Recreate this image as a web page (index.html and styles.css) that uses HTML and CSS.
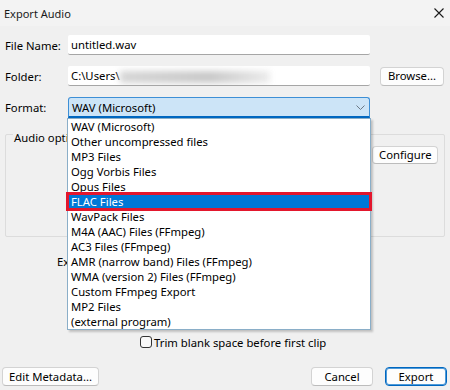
FILE: index.html
```html
<!DOCTYPE html>
<html>

<head>
    <title>Export Audio</title>
    <link rel="stylesheet" href="styles.css">
</head>

<body>
    <div class="dialog">
        <div class="titleBar">
            <span class="titleText">Export Audio</span>
            <svg class="closeIcon" width="10" height="10" viewBox="0 0 10 10">
                <path d="M0.5 0.5 L9.5 9.5 M9.5 0.5 L0.5 9.5" stroke="#1a1a1a" stroke-width="1.1" fill="none" />
            </svg>
        </div>

        <div class="form">
            <div class="row firstRow">
                <div class="label">File Name:</div>
                <div class="textInput">untitled.wav</div>
            </div>
            <div class="row">
                <div class="label">Folder:</div>
                <div class="textInput">C:\Users\<span class="blurred"></span></div>
                <button class="btn browseBtn">Browse...</button>
            </div>
            <div class="row">
                <div class="label">Format:</div>
                <div class="combo">
                    <span>WAV (Microsoft)</span>
                    <svg class="chevron" width="9" height="5" viewBox="0 0 9 5">
                        <path d="M0.5 0.5 L4.5 4.5 L8.5 0.5" stroke="#6d7884" stroke-width="1" fill="none" />
                    </svg>
                </div>
            </div>

            <div class="group">
                <span class="groupTitle">Audio options</span>
                <div class="groupBody">
                    <button class="btn configureBtn">Configure</button>
                </div>
            </div>

            <div class="rangeRow">Export Range:</div>

            <div class="trimRow">
                <span class="checkBox"></span>
                <span>Trim blank space before first clip</span>
            </div>

            <div class="footer">
                <button class="btn">Edit Metadata...</button>
                <div class="footerRight">
                    <button class="btn footerBtn">Cancel</button>
                    <button class="btn footerBtn defaultBtn">Export</button>
                </div>
            </div>
        </div>

        <!-- offene Liste der Formate, liegt über dem Dialog -->
        <div class="dropList">
            <div class="item">WAV (Microsoft)</div>
            <div class="item">Other uncompressed files</div>
            <div class="item">MP3 Files</div>
            <div class="item">Ogg Vorbis Files</div>
            <div class="item">Opus Files</div>
            <div class="item selected">FLAC Files</div>
            <div class="item">WavPack Files</div>
            <div class="item">M4A (AAC) Files (FFmpeg)</div>
            <div class="item">AC3 Files (FFmpeg)</div>
            <div class="item">AMR (narrow band) Files (FFmpeg)</div>
            <div class="item">WMA (version 2) Files (FFmpeg)</div>
            <div class="item">Custom FFmpeg Export</div>
            <div class="item">MP2 Files</div>
            <div class="item">(external program)</div>
        </div>
    </div>
</body>

</html>
```

FILE: styles.css
```css
body {
    margin: 0;
    font-family: "Noto Sans", "Open Sans", sans-serif;
    font-size: 11.3px;
    color: #000000;
    background-color: #f0f0f0;
}

.dialog {
    position: relative;
    width: 450px;
    height: 390px;
    overflow: hidden;
    background-color: #f0f0f0;
}

.titleBar {
    height: 26px;
    display: flex;
    align-items: center;
    justify-content: space-between;
    padding: 0 5px 0 4px;
    background-color: #f3f3f3;
}

.titleText {
    font-size: 11px;
    color: #1a1a1a;
}

.closeIcon {
    margin-right: 1px;
}

.form {
    display: flex;
    flex-direction: column;
    padding: 0 5px 0 5px;
}

.row {
    display: flex;
    align-items: center;
    margin-top: 11px;
}

.firstRow {
    margin-top: 9px;
}

.label {
    width: 63px;
}

.textInput {
    height: 20px;
    line-height: 19px;
    padding-left: 3px;
    box-sizing: border-box;
    width: 302px;
    background-color: #ffffff;
    border-bottom: 1px solid #a6a6a6;
    border-radius: 2px;
    white-space: nowrap;
    overflow: hidden;
}

.blurred {
    display: inline-block;
    width: 150px;
    height: 12px;
    vertical-align: middle;
    background: linear-gradient(to right, #d6d6d6, #c8c8c8 60%, #ececec);
    filter: blur(3px);
}

.btn {
    font-family: inherit;
    font-size: 11.3px;
    color: #000000;
    height: 19px;
    padding: 0 6px;
    background-color: #fdfdfd;
    border: 1px solid #d3d3d3;
    border-bottom-color: #bcbcbc;
    border-radius: 4px;
    line-height: 16px;
}

.browseBtn {
    margin-left: 10px;
    width: 64px;
}

.combo {
    width: 302px;
    height: 21px;
    box-sizing: border-box;
    display: flex;
    align-items: center;
    justify-content: space-between;
    padding: 0 4px 0 3px;
    background-color: #cce4f7;
    border: 1px solid #3d8fd6;
    border-bottom: 2px solid #0067c0;
    border-radius: 3px 3px 0 0;
}

.chevron {
    margin-top: 1px;
}

.group {
    margin-top: 16px;
    height: 103px;
    box-sizing: border-box;
    border: 1px solid #dcdcdc;
    border-radius: 2px;
}

.groupTitle {
    display: inline-block;
    margin: -5px 0 0 7px;
    padding: 0 1px;
    background-color: #f0f0f0;
    vertical-align: top;
}

.groupBody {
    display: flex;
    justify-content: flex-end;
    padding: 0 6px 0 0;
}

.configureBtn {
    margin-top: -4px;
    width: 66px;
    height: 18px;
}

.rangeRow {
    margin: 17px 0 0 52px;
    height: 16px;
}

.trimRow {
    display: flex;
    align-items: center;
    margin: 64px 0 0 135px;
    height: 16px;
}

.checkBox {
    width: 10px;
    height: 10px;
    border: 1px solid #333333;
    border-radius: 3px;
    margin-right: 2px;
    background-color: #f8f8f8;
}

.footer {
    display: flex;
    justify-content: space-between;
    margin: 17px -2px 0 -3px;
}

.footerRight {
    display: flex;
    gap: 12px;
}

.footerBtn {
    width: 62px;
}

.defaultBtn {
    border: 1px solid #0067c0;
    box-shadow: inset 0 0 0 1px #4f9ad8;
}

.dropList {
    position: absolute;
    left: 67px;
    top: 118px;
    width: 304px;
    box-sizing: border-box;
    background-color: #ffffff;
    border: 1px solid #8aaec8;
    box-shadow: 2px 2px 2px rgba(0, 0, 0, 0.2);
}

.item {
    height: 15px;
    line-height: 15px;
    padding-left: 3px;
    white-space: nowrap;
}

.item.selected {
    position: relative;
    background-color: #0078d7;
    color: #ffffff;
    box-shadow: 0 0 0 2px #e3172d, inset 0 0 0 1px #e3172d;
}
```
